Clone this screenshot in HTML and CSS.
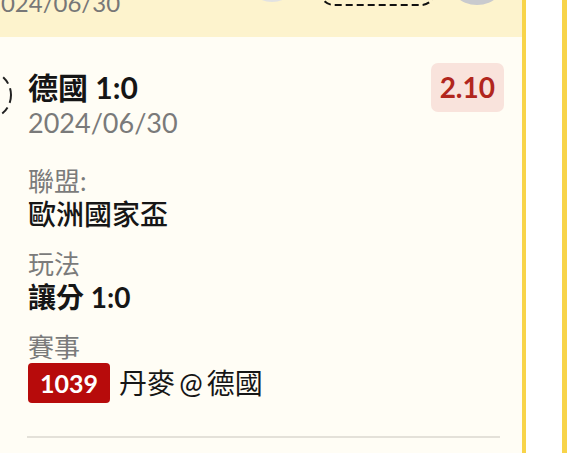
FILE: index.html
```html
<!DOCTYPE html>
<html lang="zh-Hant">
<head>
<meta charset="utf-8">
<title>Bet slip</title>
<link rel="stylesheet" href="styles.css">
</head>
<body>
<div class="track">
  <section class="card">
    <header class="card-head">
      <div class="head-date">2024/06/30</div>
      <div class="head-actions">
        <span class="btn-circle light"></span>
        <svg class="btn-pill" width="117" height="40" viewBox="0 0 117 40"><rect x="1" y="1" width="115" height="38" rx="14" fill="none" stroke="#111" stroke-width="2" stroke-dasharray="7 4"/></svg>
        <span class="btn-circle dark"></span>
      </div>
    </header>
    <div class="card-body">
      <div class="row">
        <svg class="radio" width="50" height="50" viewBox="0 0 50 50"><circle cx="25" cy="25" r="24" fill="none" stroke="#222" stroke-width="2" stroke-dasharray="8 5"/></svg>
        <div class="content">
          <div class="title">德國 1:0</div>
          <div class="date">2024/06/30</div>
          <div class="field first">
            <div class="label">聯盟:</div>
            <div class="value">歐洲國家盃</div>
          </div>
          <div class="field">
            <div class="label">玩法</div>
            <div class="value strong">讓分 1:0</div>
          </div>
          <div class="field">
            <div class="label">賽事</div>
            <div class="match">
              <span class="match-no">1039</span>
              <span class="match-name">丹麥 @ 德國</span>
            </div>
          </div>
        </div>
        <div class="odds">2.10</div>
      </div>
      <div class="divider"></div>
    </div>
  </section>
  <section class="card next"></section>
</div>
</body>
</html>
```

FILE: styles.css
```css
html, body {
  margin: 0;
  padding: 0;
  background: #ffffff;
  overflow: hidden;
  width: 567px;
  height: 453px;
}

body {
  font-family: Lato, "Noto Sans CJK TC", sans-serif;
  color: #1c1c1c;
}

.track {
  display: flex;
  gap: 36px;
  margin-top: -63px;
  margin-left: -58px;
}

.card {
  flex: none;
  width: 580px;
  height: 516px;
  border-right: 4px solid #f8d449;
  background: #fffdf5;
}

.card.next {
  width: 200px;
  border-right: none;
  border-left: 5px solid #f8d449;
  background: #ffffff;
}

.card-head {
  box-sizing: border-box;
  height: 100px;
  display: flex;
  align-items: flex-end;
  padding: 0 14px 20px 45px;
  background: #fdf3cd;
}

.head-date {
  font-size: 24px;
  line-height: 28px;
  color: #777777;
}

.head-actions {
  margin-left: auto;
  display: flex;
  align-items: flex-end;
}

.btn-circle {
  display: block;
  border-radius: 50%;
}

.btn-circle.light {
  width: 56px;
  height: 56px;
  background: #e2e2e2;
  margin-bottom: 15px;
  margin-right: 19px;
}

.btn-pill {
  display: block;
  margin-bottom: 11px;
  margin-right: 10px;
}

.btn-circle.dark {
  width: 62px;
  height: 62px;
  background: #c9cace;
  margin-bottom: 12px;
}

.card-body {
  padding: 26px 18px 0 20px;
}

.row {
  display: flex;
  align-items: flex-start;
}

.radio {
  flex: none;
  margin-top: 7px;
  margin-right: 16px;
}

.content {
  flex: 1;
  padding-top: 7px;
}

.title {
  font-size: 30px;
  line-height: 35px;
  font-weight: 700;
  color: #151515;
}

.date {
  font-size: 27px;
  line-height: 35px;
  color: #7a7a7a;
}

.field {
  margin-top: 17px;
}

.field.first {
  margin-top: 25px;
}

.label {
  font-size: 26px;
  line-height: 32px;
  color: #7b7b7b;
}

.value {
  font-size: 28px;
  line-height: 34px;
  font-weight: 500;
  color: #161616;
}

.value.strong {
  font-weight: 700;
}

.match {
  display: flex;
  align-items: center;
  gap: 9px;
  height: 40px;
}

.match-no {
  display: block;
  height: 40px;
  line-height: 40px;
  padding: 0 12px;
  border-radius: 4px;
  background: #b70b0b;
  color: #ffffff;
  font-size: 25px;
  font-weight: 700;
}

.match-name {
  font-size: 28px;
  line-height: 34px;
  color: #161616;
  white-space: pre;
  word-spacing: -3px;
}

.odds {
  flex: none;
  padding: 7px 9px;
  font-size: 28px;
  line-height: 35px;
  font-weight: 700;
  color: #b1261d;
  background: #f9e3dc;
  border-radius: 7px;
}

.divider {
  height: 2px;
  margin: 33px 4px 0 65px;
  background: #e4e1d9;
}
```
